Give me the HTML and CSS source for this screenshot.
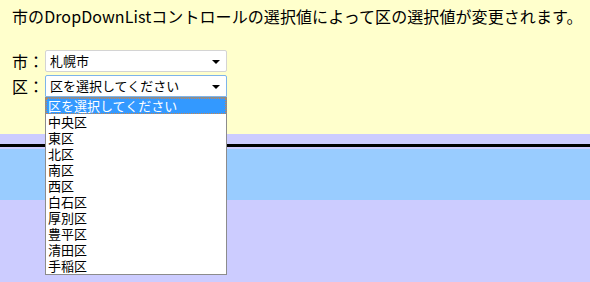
FILE: index.html
```html
<!DOCTYPE html>
<html lang="ja">
<head>
  <meta charset="UTF-8" />
  <title>DropDownList</title>
  <link rel="stylesheet" href="styles.css">
</head>
<body>
  <div class="top">
    <div class="lead">市のDropDownListコントロールの選択値によって区の選択値が変更されます。</div>
    <div class="form">
      <div class="row">
        <span class="label">市：</span>
        <div class="select-wrap">
          <div class="select">札幌市<span class="arrow"></span></div>
        </div>
      </div>
      <div class="row">
        <span class="label">区：</span>
        <div class="select-wrap">
          <div class="select focus">区を選択してください<span class="arrow"></span></div>
          <!-- open dropdown list -->
          <ul class="options">
            <li class="selected">区を選択してください</li>
            <li>中央区</li>
            <li>東区</li>
            <li>北区</li>
            <li>南区</li>
            <li>西区</li>
            <li>白石区</li>
            <li>厚別区</li>
            <li>豊平区</li>
            <li>清田区</li>
            <li>手稲区</li>
          </ul>
        </div>
      </div>
    </div>
  </div>
  <div class="spacer"></div>
  <div class="rule"></div>
  <div class="band"></div>
</body>
</html>
```

FILE: styles.css
```css
html, body {
  margin: 0;
  height: 100%;
  background: #ccccff;
  font-family: "Noto Sans CJK JP", "DejaVu Sans", sans-serif;
  color: #000;
}
.top {
  background: #ffffcc;
  height: 134px;
  box-sizing: border-box;
  padding: 4px 0 0 12px;
}
.lead {
  font-size: 16px;
  line-height: 24px;
  letter-spacing: 0.08px;
  white-space: nowrap;
}
.form {
  margin-top: 22px;
  display: flex;
  flex-direction: column;
  gap: 3px;
}
.row {
  display: flex;
  align-items: center;
  height: 22px;
}
.label {
  font-size: 16px;
  width: 33px;
  line-height: 22px;
}
.select-wrap {
  position: relative;
}
.select {
  width: 182px;
  height: 22px;
  box-sizing: border-box;
  border: 1px solid #d4d4d4;
  border-radius: 2px;
  background: #fff;
  font-size: 13px;
  line-height: 20px;
  padding-left: 4px;
  position: relative;
}
.select.focus {
  border-color: #7eb4ea;
  border-radius: 2px 2px 0 0;
}
.arrow {
  position: absolute;
  right: 6px;
  top: 9px;
  width: 0;
  height: 0;
  border-left: 4px solid transparent;
  border-right: 4px solid transparent;
  border-top: 4px solid #000;
}
.options {
  position: absolute;
  top: 22px;
  left: 0;
  width: 182px;
  box-sizing: border-box;
  margin: 0;
  padding: 0;
  list-style: none;
  background: #fff;
  border: 1px solid #8c8c8c;
  font-size: 13px;
}
.options li {
  height: 16px;
  line-height: 16px;
  padding-left: 2px;
  white-space: nowrap;
}
.options li.selected {
  background: #3399ff;
  color: #fff;
  outline: 1px dotted #c9864d;
  outline-offset: -1px;
}
.spacer {
  height: 10px;
}
.rule {
  height: 3px;
  background: #000;
  border-bottom: 2px solid #ccccff;
}
.band {
  height: 51px;
  background: #99ccff;
}
```
